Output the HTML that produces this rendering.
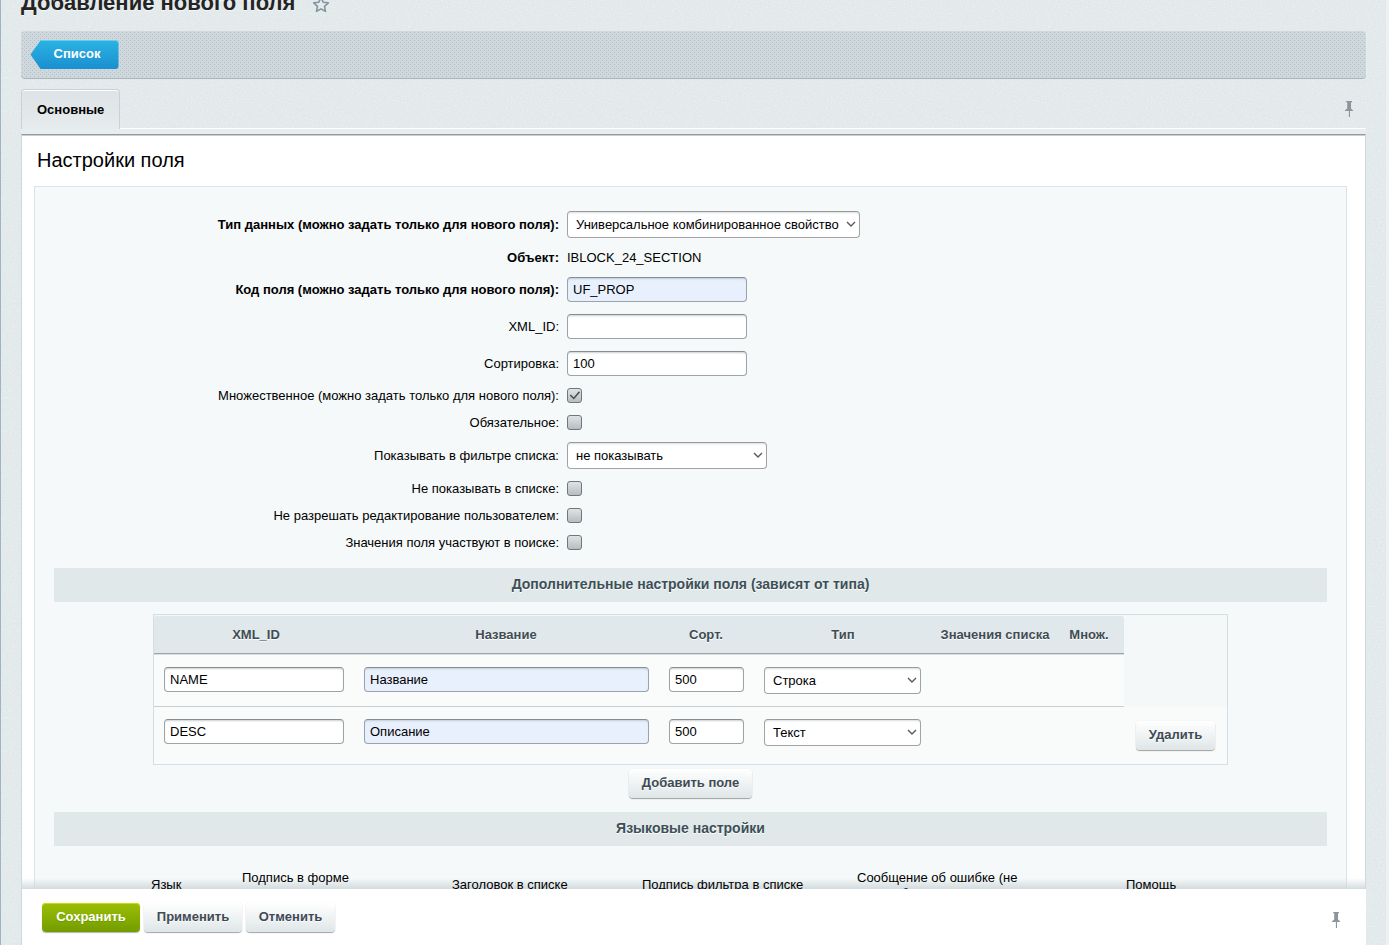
<!DOCTYPE html>
<html><head><meta charset="utf-8">
<style>
*{box-sizing:border-box}
html,body{margin:0;padding:0}
body{width:1389px;height:945px;overflow:hidden;position:relative;background:#e1e8ea;font-family:"Liberation Sans",sans-serif;font-size:13px;color:#000}
.a{position:absolute}
#lb{left:0;top:0;width:1px;height:945px;background:#9fb3c4}
#rb{left:1386px;top:0;width:3px;height:945px;background:#eef0f1}
#title{left:21px;top:-10px;font-size:22px;font-weight:bold;color:#242424;text-shadow:0 1px rgba(255,255,255,.6);white-space:nowrap;line-height:26px}
#star{left:312px;top:-4px}
#toolbar{left:21px;top:31px;width:1345px;height:48px;border-radius:4px;background-color:#cfd8dc;
 background-image:conic-gradient(from 270deg at 1px 1px,#b4bdc1 90deg,transparent 0),conic-gradient(from 270deg at 1px 1px,#b4bdc1 90deg,transparent 0);
 background-size:4px 4px,4px 4px;background-position:1px 1px,3px 3px;
 box-shadow:inset 0 -1px 0 #aab4b8}
#btnlist{left:30px;top:40px;width:89px;height:29px}
#tab{left:21px;top:89px;width:99px;height:40px;border:1px solid #c9d1d4;border-bottom:none;border-radius:4px 4px 0 0;
 background:linear-gradient(#dde3e6,#e6ebed);box-shadow:inset 0 1px 0 #fff}
#tabtxt{left:37px;top:102px;font-weight:bold;line-height:16px}
#tabband{left:21px;top:128px;width:1345px;height:7px;background:#e8eef0;border-top:1px solid #fff}
#pin1{left:1344px;top:100px}
#panel{left:21px;top:134px;width:1345px;height:811px;background:#fff;border:1px solid #d0d8db;border-top:1px solid #939b9e;box-shadow:inset 0 1px 0 #c9cfd1}
#h2{left:37px;top:148px;font-size:20px;line-height:24px}
#inner{left:34px;top:186px;width:1313px;height:759px;background:#f5f9f9;border:1px solid #dae4e8}
.lbl{position:absolute;right:830px;white-space:nowrap;line-height:16px}
.b{font-weight:bold}
.inp{position:absolute;height:25px;background:#fff;border:1px solid #9aa3a8;border-top-color:#858e94;border-radius:4px;
 box-shadow:inset 0 2px 2px -1px rgba(180,188,191,.7);padding:0 0 0 5px;line-height:23px;white-space:nowrap}
.auto{background:#e8f0fe}
.sel{position:absolute;height:27px;background:#fff;border:1px solid #a3a3a3;border-top-color:#999;box-shadow:inset 0 2px 2px -1px rgba(150,160,165,.35);border-radius:4px;padding-left:8px;line-height:25px;white-space:nowrap}
.sel svg{position:absolute;right:3px;top:9px}
.cb{position:absolute;left:567px;width:15px;height:15px;border:1px solid #6f777b;border-radius:3px;
 background:linear-gradient(#dfe3e5,#b7bdc0)}
.heading{position:absolute;left:54px;width:1273px;height:34px;background:#e0e8ea;color:#3d4f57;font-size:14px;font-weight:bold;text-align:center;line-height:32px;text-shadow:0 1px #fff}
.btn{position:absolute;height:30px;border-radius:4px;background:linear-gradient(#fff,#dfe6e8);
 box-shadow:0 0 1px rgba(0,0,0,.15),0 1px 1px rgba(0,0,0,.35),inset 0 1px #fff;
 color:#3f4b54;font-weight:bold;text-align:center;line-height:28px;text-shadow:0 1px rgba(255,255,255,.7);white-space:nowrap}
.th{position:absolute;top:626.5px;color:#3f4d55;font-weight:bold;line-height:16px;text-align:center;white-space:nowrap;text-shadow:0 1px #fff}
.lh{position:absolute;white-space:nowrap;line-height:16px;text-align:center}
#footer{left:22px;top:889px;width:1344px;height:56px;background:#fff}
#fshadow{left:22px;top:878px;width:1344px;height:11px;background:linear-gradient(rgba(200,210,214,0),rgba(205,214,218,.85))}
</style></head><body>
<svg class="a" style="left:0;top:0" width="1389" height="945"><filter id="nz" x="0" y="0" width="100%" height="100%"><feTurbulence type="fractalNoise" baseFrequency="0.8" numOctaves="2" seed="3"/><feColorMatrix values="0 0 0 0 1  0 0 0 0 1  0 0 0 0 1  0 0 0 0.8 -0.33"/></filter><rect width="1389" height="945" filter="url(#nz)"/></svg>
<div class="a" id="lb"></div>
<div class="a" id="rb"></div>
<div class="a" id="title">Добавление нового поля</div>
<svg class="a" id="star" width="18" height="18" viewBox="0 0 18 18"><path d="M9 1.5l2.2 4.7 5.1.6-3.8 3.5 1 5.1L9 12.9l-4.5 2.5 1-5.1L1.7 6.8l5.1-.6z" fill="none" stroke="#8592a0" stroke-width="1.6" stroke-linejoin="round"/></svg>

<div class="a" id="toolbar"></div>
<svg class="a" id="btnlist" width="88" height="29" viewBox="0 0 88 29">
 <defs><linearGradient id="gb" x1="0" y1="0" x2="0" y2="1"><stop offset="0" stop-color="#2bb3e3"/><stop offset="1" stop-color="#1a8fd0"/></linearGradient></defs>
 <path d="M10 0.5H85a3 3 0 0 1 3 3V26a3 3 0 0 1-3 3H10L0 14.5z" fill="url(#gb)"/>
 <path d="M10 0.5H85a3 3 0 0 1 3 3" fill="none" stroke="#5fd0f2" stroke-width="1"/>
 <text x="23" y="18" font-family="Liberation Sans" font-size="13" font-weight="bold" fill="#fff">Список</text>
</svg>

<div class="a" id="tabband"></div>
<div class="a" id="tab"></div>
<div class="a" id="tabtxt">Основные</div>
<svg class="a" id="pin1" width="11" height="18" viewBox="0 0 11 18"><path d="M2.2 1H8V2.2H7V8.4L9 10.2V11H1V10.2L3.2 8.4V2.2H2.2Z" fill="#8c969a"/><rect x="4.9" y="11" width="1.1" height="6" fill="#8c969a"/></svg>

<div class="a" id="panel"></div>
<div class="a" id="h2">Настройки поля</div>
<div class="a" id="inner"></div>

<!-- form rows -->
<div class="lbl b" style="top:217px">Тип данных (можно задать только для нового поля):</div>
<div class="sel" style="left:567px;top:211px;width:293px">Универсальное комбинированное свойство<svg width="10" height="7" viewBox="0 0 10 7"><path d="M1 1l4 4 4-4" fill="none" stroke="#5a5a5a" stroke-width="1.4"/></svg></div>
<div class="lbl b" style="top:250px">Объект:</div>
<div class="a" style="left:567px;top:250px;line-height:16px">IBLOCK_24_SECTION</div>
<div class="lbl b" style="top:282px">Код поля (можно задать только для нового поля):</div>
<div class="inp auto" style="left:567px;top:277px;width:180px">UF_PROP</div>
<div class="lbl" style="top:319px">XML_ID:</div>
<div class="inp" style="left:567px;top:314px;width:180px"></div>
<div class="lbl" style="top:356px">Сортировка:</div>
<div class="inp" style="left:567px;top:351px;width:180px">100</div>
<div class="lbl" style="top:388px">Множественное (можно задать только для нового поля):</div>
<div class="cb" style="top:388px"><svg width="13" height="13" viewBox="0 0 13 13" style="position:absolute;left:0;top:0"><path d="M2.3 5.9L5.8 9.5L11.5 2.7" fill="none" stroke="#454b4f" stroke-width="1.5"/></svg></div>
<div class="lbl" style="top:415px">Обязательное:</div>
<div class="cb" style="top:415px"></div>
<div class="lbl" style="top:448px">Показывать в фильтре списка:</div>
<div class="sel" style="left:567px;top:442px;width:200px">не показывать<svg width="10" height="7" viewBox="0 0 10 7"><path d="M1 1l4 4 4-4" fill="none" stroke="#5a5a5a" stroke-width="1.4"/></svg></div>
<div class="lbl" style="top:481px">Не показывать в списке:</div>
<div class="cb" style="top:481px"></div>
<div class="lbl" style="top:508px">Не разрешать редактирование пользователем:</div>
<div class="cb" style="top:508px"></div>
<div class="lbl" style="top:535px">Значения поля участвуют в поиске:</div>
<div class="cb" style="top:535px"></div>

<div class="heading" style="top:568px">Дополнительные настройки поля (зависят от типа)</div>

<!-- inner table -->
<div class="a" style="left:153px;top:614px;width:1075px;height:151px;border:1px solid #d5dfe3;background:#f5f8f9"></div>
<div class="a" style="left:154px;top:615px;width:970px;height:39px;background:#e1e8eb;border-bottom:1px solid #9ea3a5;box-shadow:0 1px 0 #d9dee0,inset 0 1px 0 rgba(255,255,255,.6);border-radius:3px 3px 0 0"></div>
<div class="a" style="left:154px;top:655px;width:970px;height:51px;background:#fafbfb"></div>
<div class="a" style="left:154px;top:706px;width:970px;height:1px;background:#c9ced1"></div>
<div class="a" style="left:154px;top:707px;width:1073px;height:57px;background:#f9fbfb"></div>
<div class="th" style="left:154px;width:204px">XML_ID</div>
<div class="th" style="left:358px;width:296px">Название</div>
<div class="th" style="left:659px;width:94px">Сорт.</div>
<div class="th" style="left:758px;width:170px">Тип</div>
<div class="th" style="left:930px;width:130px">Значения списка</div>
<div class="th" style="left:1060px;width:58px">Множ.</div>

<div class="inp" style="left:164px;top:667px;width:180px">NAME</div>
<div class="inp auto" style="left:364px;top:667px;width:285px">Название</div>
<div class="inp" style="left:669px;top:667px;width:75px">500</div>
<div class="sel" style="left:764px;top:667px;width:157px">Строка<svg width="10" height="7" viewBox="0 0 10 7"><path d="M1 1l4 4 4-4" fill="none" stroke="#5a5a5a" stroke-width="1.4"/></svg></div>

<div class="inp" style="left:164px;top:719px;width:180px">DESC</div>
<div class="inp auto" style="left:364px;top:719px;width:285px">Описание</div>
<div class="inp" style="left:669px;top:719px;width:75px">500</div>
<div class="sel" style="left:764px;top:719px;width:157px">Текст<svg width="10" height="7" viewBox="0 0 10 7"><path d="M1 1l4 4 4-4" fill="none" stroke="#5a5a5a" stroke-width="1.4"/></svg></div>
<div class="btn" style="left:1136px;top:721px;width:79px;height:29px">Удалить</div>

<div class="btn" style="left:629px;top:769px;width:123px;height:29px">Добавить поле</div>

<div class="heading" style="top:812px">Языковые настройки</div>

<div class="a" id="fshadow"></div>
<div class="lh" style="left:151px;top:877px">Язык</div>
<div class="lh" style="left:242px;top:870px">Подпись в форме<br>редактирования</div>
<div class="lh" style="left:452px;top:877px">Заголовок в списке</div>
<div class="lh" style="left:642px;top:877px">Подпись фильтра в списке</div>
<div class="lh" style="left:857px;top:870px">Сообщение об ошибке (не<br>обязательное)</div>
<div class="lh" style="left:1126px;top:877px">Помощь</div>

<div class="a" id="footer"></div>
<div class="a" style="left:42px;top:903px;width:98px;height:29px;border-radius:4px;background:linear-gradient(#9cbe08,#87ae00 50%,#729c00);box-shadow:0 1px 1px rgba(0,0,0,.3),inset 0 1px #c8e000;color:#fff;font-weight:bold;text-align:center;line-height:28px;text-shadow:0 1px rgba(89,137,0,.5)">Сохранить</div>
<div class="btn" style="left:144px;top:903px;width:98px;height:29px;line-height:28px">Применить</div>
<div class="btn" style="left:246px;top:903px;width:89px;height:29px;line-height:28px">Отменить</div>
<svg class="a" style="left:1331px;top:911px" width="11" height="18" viewBox="0 0 11 18"><path d="M2.2 1H8V2.2H7V8.4L9 10.2V11H1V10.2L3.2 8.4V2.2H2.2Z" fill="#8c969a"/><rect x="4.9" y="11" width="1.1" height="6" fill="#8c969a"/></svg>
</body></html>
